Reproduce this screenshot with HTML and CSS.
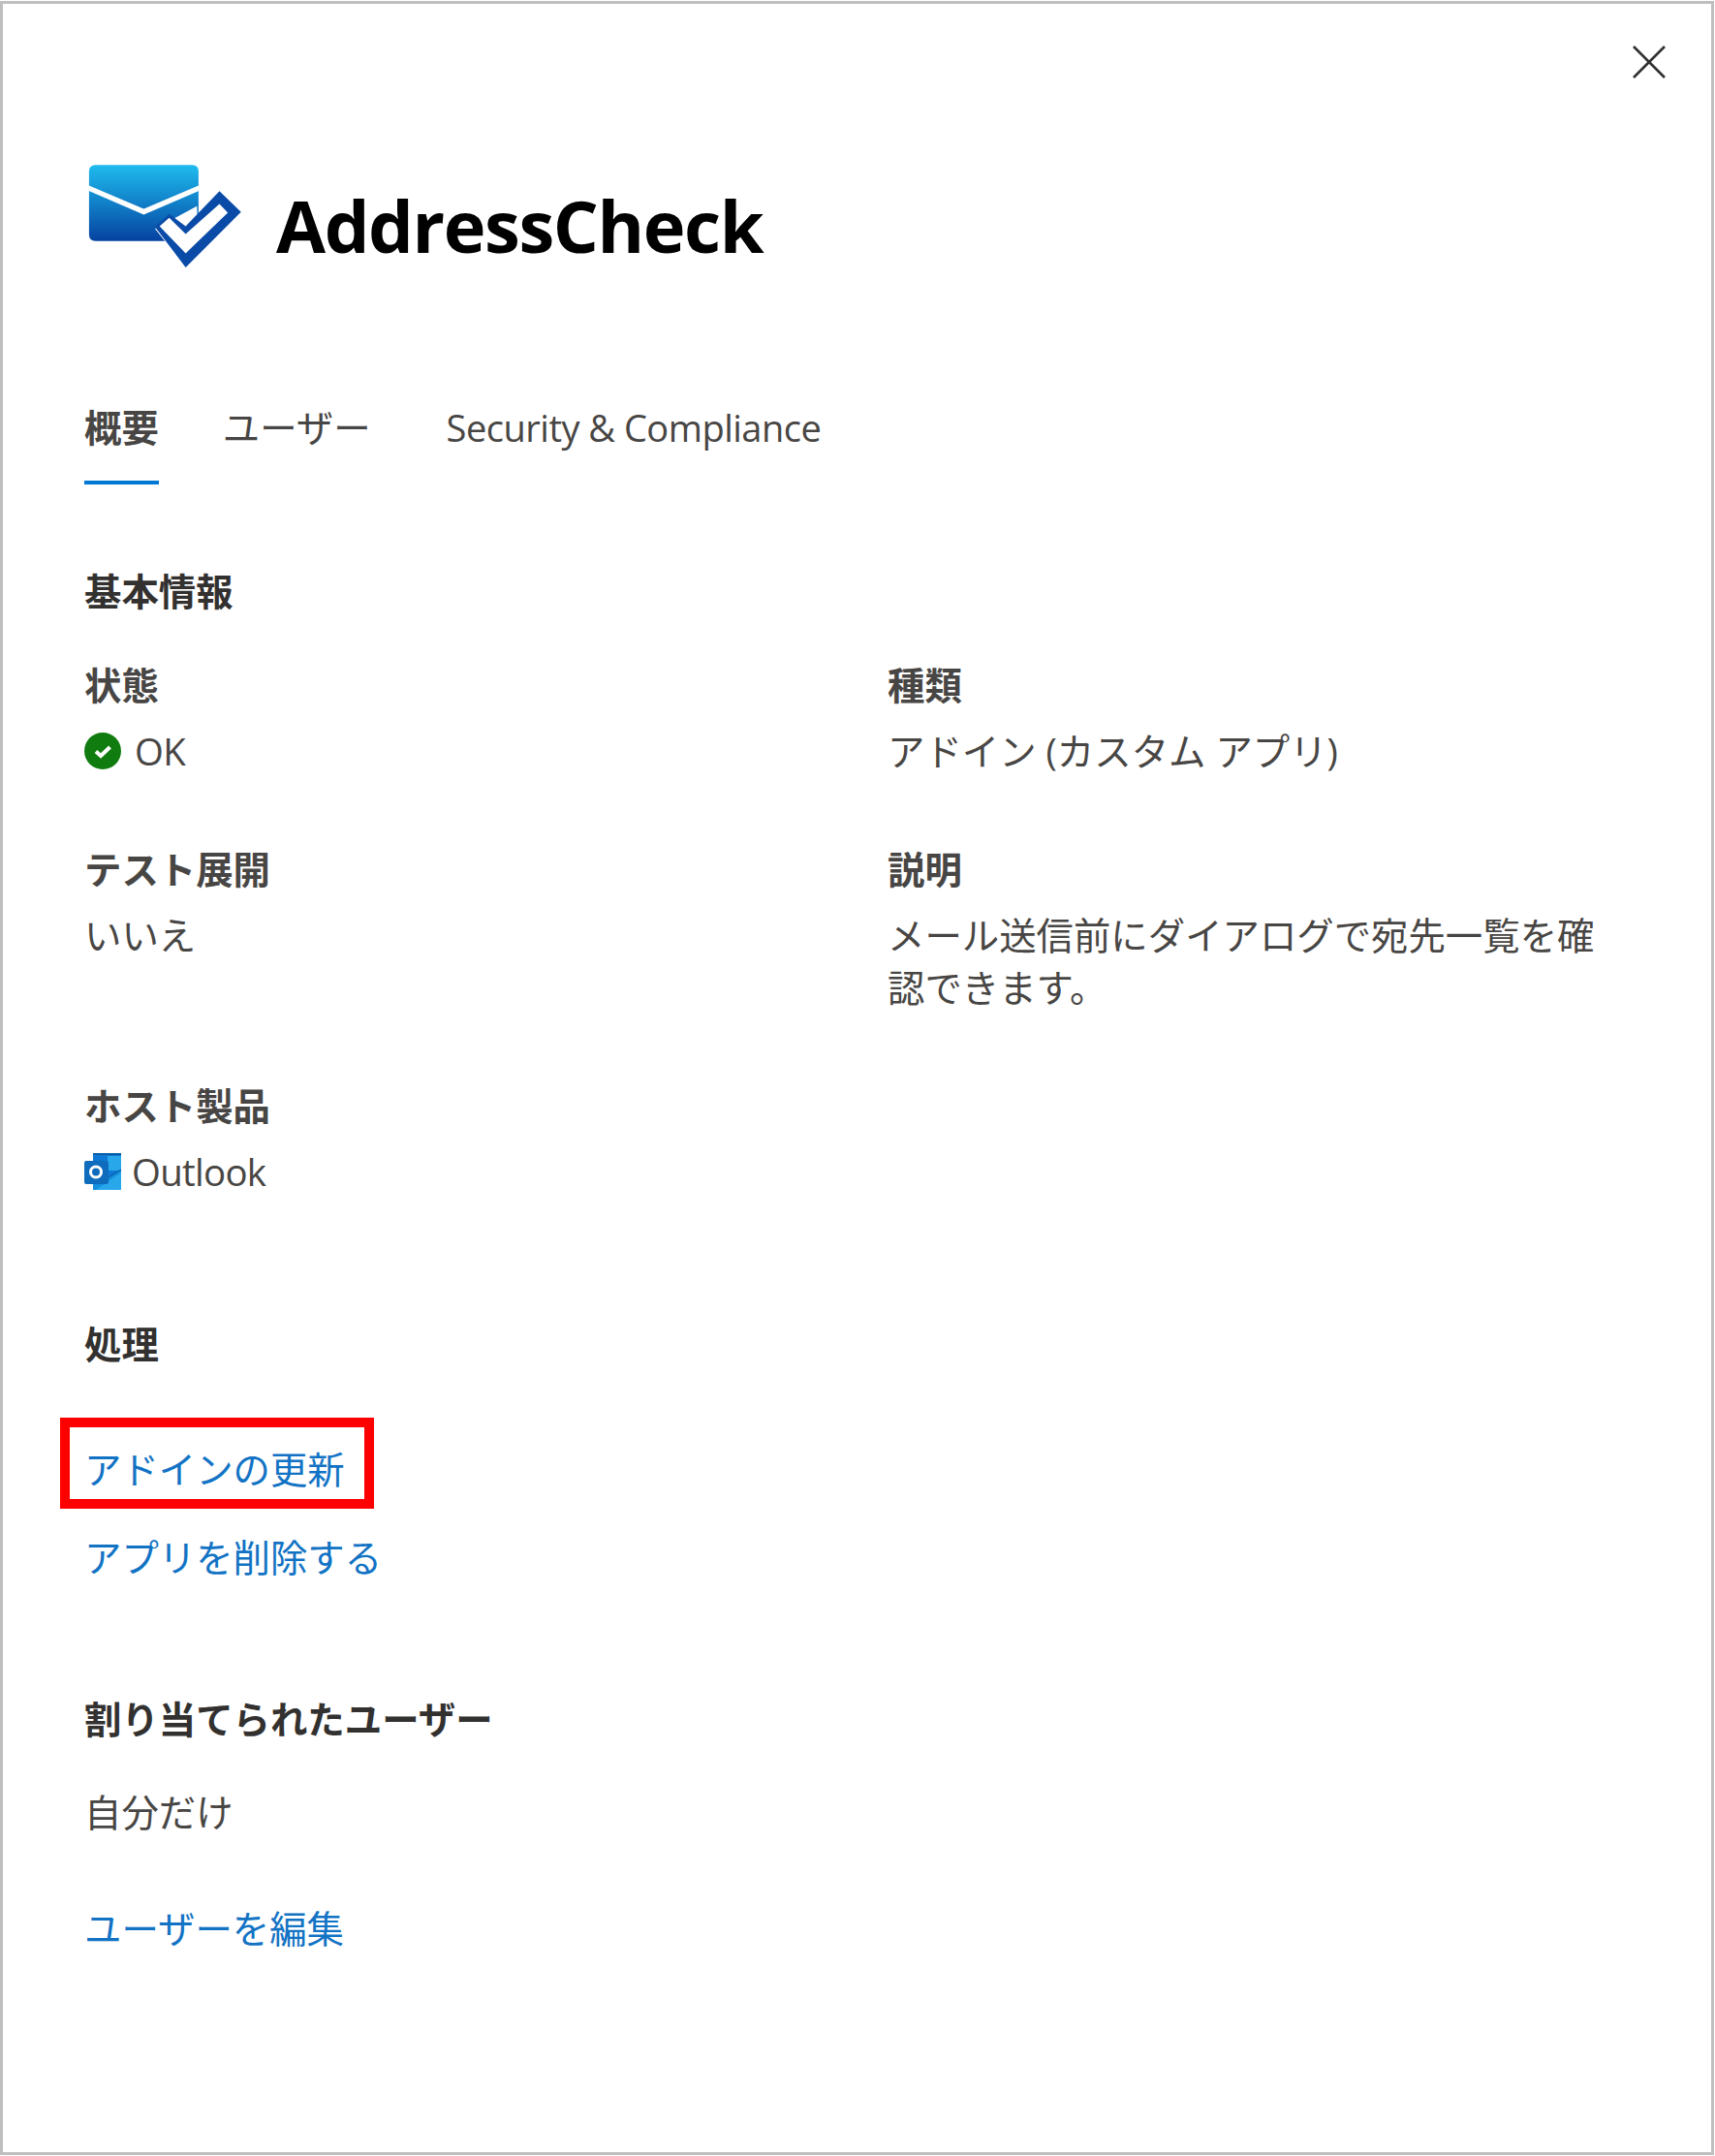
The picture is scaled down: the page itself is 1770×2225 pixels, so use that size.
FILE: index.html
```html
<!DOCTYPE html>
<html lang="ja">
<head>
  <meta charset="UTF-8">
  <title>AddressCheck</title>
  <link rel="stylesheet" href="styles.css">
</head>
<body>
  <div class="panel">

    <div class="close-row">
      <svg class="close-icon" viewBox="0 0 34 34"><path d="M1 1L33 33M33 1L1 33"/></svg>
    </div>

    <!-- app title -->
    <div class="app-head">
      <svg class="app-logo" viewBox="60 55 480 325">
        <defs>
          <linearGradient id="mailGrad" x1="0" y1="0" x2="0" y2="1">
            <stop offset="0" stop-color="#1fbbee"/>
            <stop offset="0.5" stop-color="#1180c8"/>
            <stop offset="1" stop-color="#0542a0"/>
          </linearGradient>
        </defs>
        <path d="M85 62H385Q405 62 405 82V298H85Q65 298 65 278V82Q65 62 85 62Z" fill="url(#mailGrad)"/>
        <path d="M60 132L235 207L410 132" fill="none" stroke="#fff" stroke-width="16"/>
        <path d="M405 298H300L270 260L400 190Z" fill="#fff"/>
        <path d="M270 254L314 214L365 252L470 143L537 208L365 380Z" fill="#0a4ba8"/>
        <path d="M284 252L314 226L365 276L470 183L496 210L365 336Z" fill="#fff"/>
      </svg>
      <h1 class="app-title">AddressCheck</h1>
    </div>

    <div class="tabs">
      <span class="tab active">概要</span>
      <span class="tab">ユーザー</span>
      <span class="tab">Security &amp; Compliance</span>
    </div>

    <h2 class="section-title first">基本情報</h2>
    <div class="info-grid">
      <div class="field">
        <div class="field-label">状態</div>
        <div class="field-value with-icon">
          <svg class="status-icon" viewBox="0 0 38 38">
            <circle cx="19" cy="19" r="19" fill="#107c10"/>
            <path d="M12 19.5L17 24L26.5 15" fill="none" stroke="#fff" stroke-width="4"/>
          </svg>
          <span class="latin">OK</span>
        </div>
      </div>
      <div class="field">
        <div class="field-label">種類</div>
        <div class="field-value">アドイン (カスタム アプリ)</div>
      </div>
      <div class="field">
        <div class="field-label">テスト展開</div>
        <div class="field-value">いいえ</div>
      </div>
      <div class="field">
        <div class="field-label">説明</div>
        <div class="field-value">メール送信前にダイアログで宛先一覧を確認できます。</div>
      </div>
      <div class="field">
        <div class="field-label">ホスト製品</div>
        <div class="field-value with-icon">
          <svg class="outlook-icon" viewBox="0 0 38 38">
            <rect x="9" y="0" width="29" height="24" fill="#0f78d4"/>
            <rect x="9" y="0" width="29" height="2" fill="#0a5ea8"/>
            <rect x="24" y="3" width="14" height="15" fill="#28a8ea"/>
            <path d="M9 24H25L38 17V38H9Z" fill="#1490df"/>
            <path d="M12 38L38 20V38Z" fill="#28a8ea"/>
            <path d="M25 25L38 17" fill="none" stroke="#0a5ea8" stroke-width="1.4"/>
            <rect x="0" y="8" width="25" height="24" rx="2" fill="#0f6cbd"/>
            <circle cx="12" cy="19.5" r="5.5" fill="none" stroke="#fff" stroke-width="3"/>
          </svg>
          <span class="latin">Outlook</span>
        </div>
      </div>
    </div>

    <h2 class="section-title actions">処理</h2>
    <div class="action-list">
      <div class="action-item">
        <a class="link" href="#">アドインの更新</a>
        <span class="red-box"></span>
      </div>
      <div class="action-item">
        <a class="link" href="#">アプリを削除する</a>
      </div>
    </div>

    <h2 class="section-title users">割り当てられたユーザー</h2>
    <div class="user-value">自分だけ</div>
    <a class="link edit-users" href="#">ユーザーを編集</a>

  </div>
</body>
</html>
```

FILE: styles.css
```css
* {
  box-sizing: border-box;
}

body {
  margin: 0;
  background: #fff;
  font-family: "Open Sans", "Noto Sans CJK JP", sans-serif;
  color: #484644;
}

.panel {
  width: 1769px;
  height: 2223px;
  margin-top: 1px;
  border: 3px solid #bfbfbf;
  padding: 0 0 0 84px;
  font-size: 38.4px;
  line-height: 54px;
}

/* close button */
.close-row {
  display: flex;
  justify-content: flex-end;
  padding: 43px 47px 0 0;
}

.close-icon {
  width: 34px;
  height: 34px;
  fill: none;
  stroke: #323130;
  stroke-width: 2.6;
}

.app-head {
  display: flex;
  align-items: flex-start;
  gap: 35px;
  margin-top: 87px;
  margin-left: 3px;
}

.app-logo {
  width: 160px;
  height: 108px;
  flex: none;
}

.app-title {
  margin: 11px 0 0;
  font-size: 74px;
  letter-spacing: -1.4px;
  line-height: 108px;
  font-weight: 700;
  color: #000;
}

.tabs {
  display: flex;
  margin-top: 117px;
}

.tab {
  height: 96px;
  padding-top: 10px;
  margin-right: 66px;
  color: #484644;
}

.tab:nth-child(2) {
  margin-right: 78px;
}

.tab:nth-child(3) {
  font-size: 38px;
  letter-spacing: -0.5px;
}

.tab.active {
  font-weight: 700;
  color: #484644;
  border-bottom: 4px solid #0078d4;
}

.section-title {
  margin: 0;
  font-size: 38.4px;
  font-weight: 700;
  color: #323130;
  line-height: 54px;
}

.section-title.first {
  margin-top: 83px;
}

.info-grid {
  display: grid;
  grid-template-columns: 829px 730px;
  row-gap: 68px;
  margin-top: 43px;
}

.field-label {
  font-weight: 700;
  color: #484644;
  margin-bottom: 14px;
}

.with-icon {
  display: flex;
  align-items: center;
}

.latin {
  letter-spacing: -0.7px;
}

.status-icon {
  width: 38px;
  height: 38px;
  margin-right: 14px;
}

.outlook-icon {
  width: 38px;
  height: 38px;
  margin-right: 11px;
}

.section-title.actions {
  margin-top: 124px;
}

.action-list {
  margin-top: 75px;
  display: flex;
  flex-direction: column;
  gap: 37px;
}

.action-item {
  position: relative;
}

.link {
  color: #1273c4;
  text-decoration: none;
}

/* annotation drawn over the screenshot */
.red-box {
  position: absolute;
  left: -25px;
  top: -26px;
  width: 324px;
  height: 94px;
  border: 10px solid #ff0000;
}

.section-title.users {
  margin-top: 113px;
}

.user-value {
  margin-top: 42px;
}

.edit-users {
  display: block;
  margin-top: 66px;
}
```
